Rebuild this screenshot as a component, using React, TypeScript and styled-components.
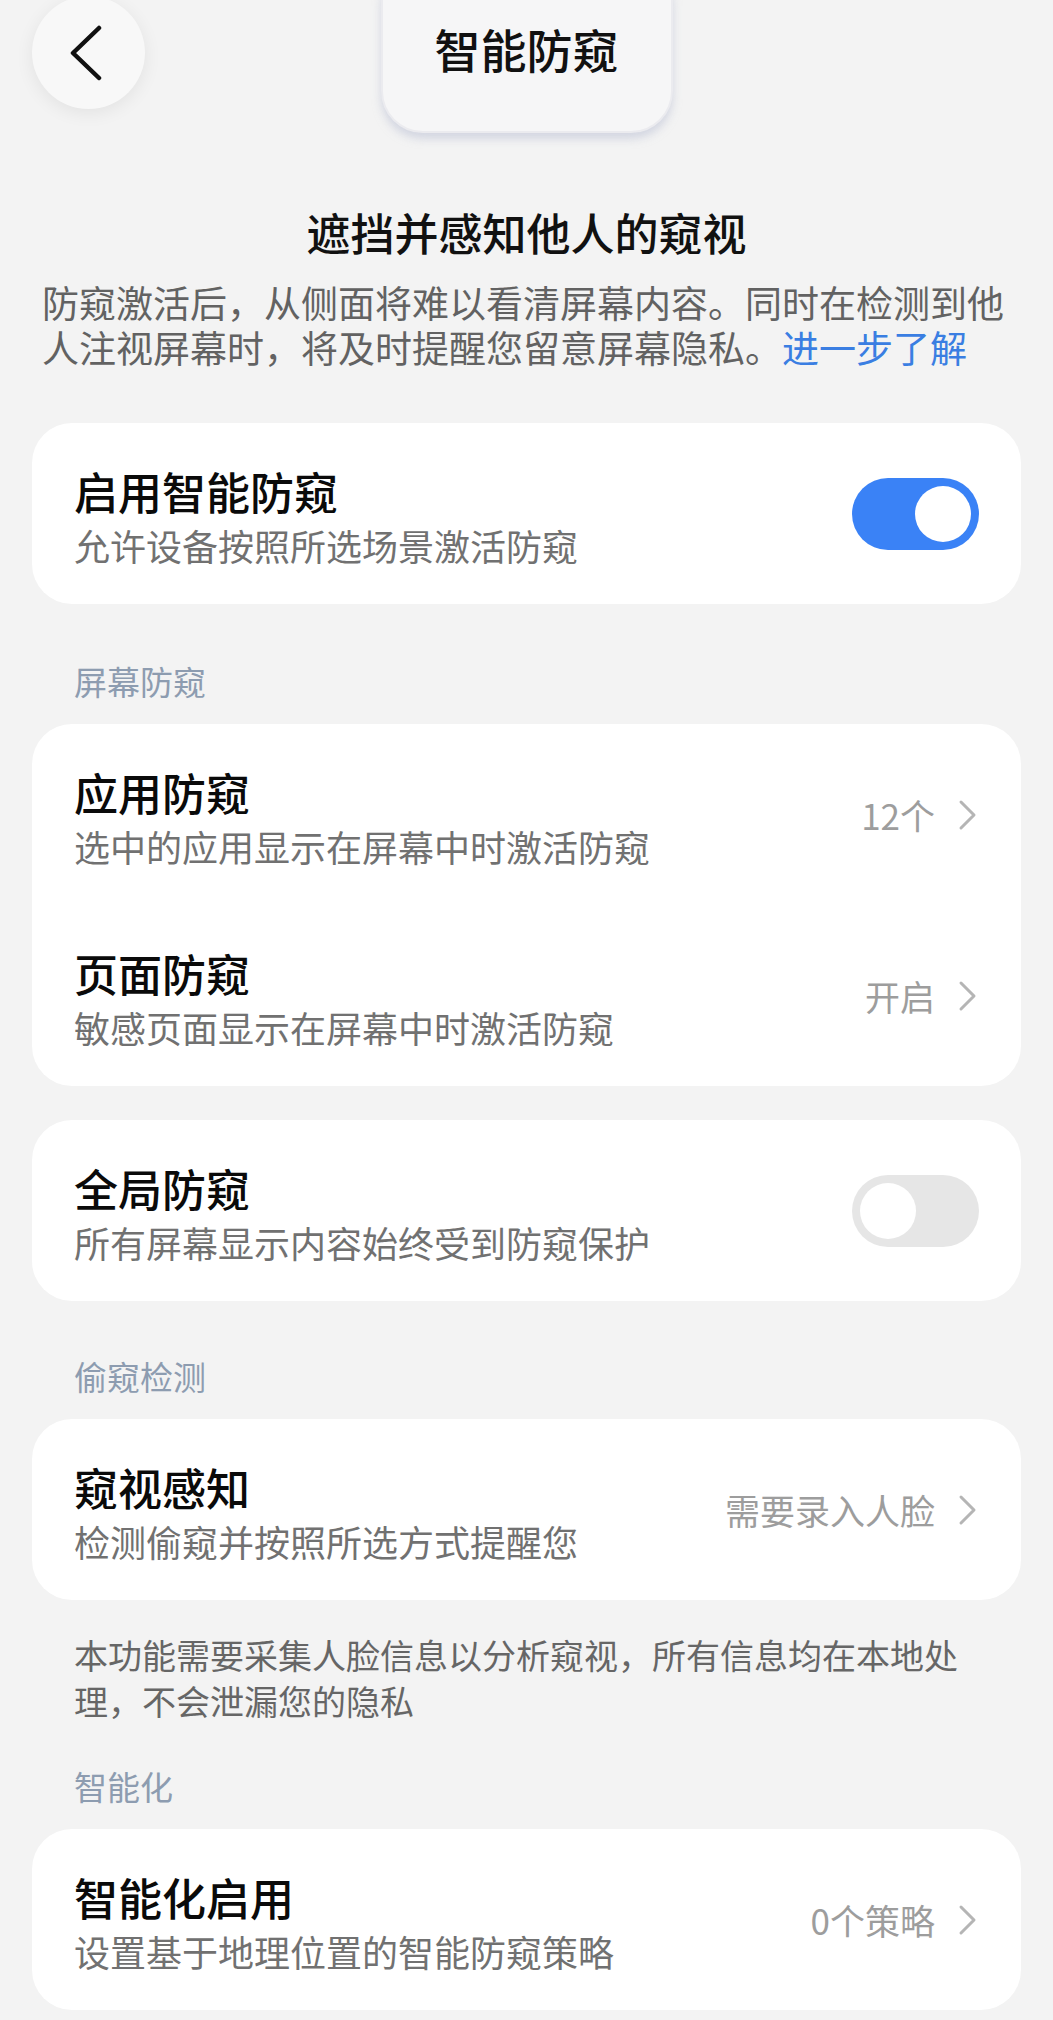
import styled, { createGlobalStyle } from "styled-components";

// --- 전역 스타일 ---
const GlobalStyle = createGlobalStyle`
  html, body {
    margin: 0;
    padding: 0;
    background: #f3f3f3;
  }
  * {
    box-sizing: border-box;
  }
`;

const BLUE = "#3a82f6";

const Page = styled.div`
  width: 1053px;
  min-height: 2020px;
  padding: 0 32px 40px;
  background: #f3f3f3;
  font-family: "Noto Sans CJK SC", "Noto Sans", sans-serif;
  color: #111;
  overflow: hidden;
`;

const Header = styled.div`
  display: grid;
  grid-template-columns: 1fr auto 1fr;
  align-items: start;
  height: 133px;
`;

const BackButton = styled.button`
  width: 113px;
  height: 113px;
  margin-top: -4px;
  border: none;
  border-radius: 50%;
  background: #f8f8f8;
  box-shadow: 0 4px 18px rgba(0, 0, 0, 0.07);
  display: flex;
  align-items: center;
  justify-content: center;
  padding: 0 6px 0 0;
  cursor: pointer;
`;

const TitleBox = styled.div`
  margin-top: -40px;
  height: 173px;
  padding: 58px 52px 0;
  border-radius: 42px;
  background: #f6f6f7;
  border: 2px solid #ebebef;
  box-shadow: 0 6px 8px rgba(186, 192, 212, 0.55);
`;

const TitleText = styled.div`
  font-size: 46px;
  line-height: 56px;
  font-weight: 500;
  white-space: nowrap;
`;

const Heading = styled.h1`
  margin: 71px 0 0;
  text-align: center;
  font-size: 44px;
  line-height: 56px;
  font-weight: 500;
`;

const Description = styled.p`
  margin: 20px 0 0;
  padding: 0 10px;
  width: 989px;
  font-size: 37px;
  line-height: 45px;
  color: #626262;
`;

const Link = styled.span`
  color: #3a7ee2;
`;

const Card = styled.div<{ $gap?: number }>`
  margin-top: ${(p) => p.$gap ?? 0}px;
  background: #fff;
  border-radius: 40px;
`;

const Row = styled.div`
  display: flex;
  align-items: center;
  justify-content: space-between;
  height: 181px;
  padding: 0 42px 0 42px;
`;

const RowText = styled.div`
  display: flex;
  flex-direction: column;
  gap: 6px;
  padding-top: 4px;
`;

const RowTitle = styled.div`
  font-size: 44px;
  line-height: 52px;
  font-weight: 500;
  color: #0a0a0a;
`;

const RowSub = styled.div`
  font-size: 36px;
  line-height: 44px;
  color: #717171;
`;

const ValueWrap = styled.div`
  display: flex;
  align-items: center;
  gap: 22px;
  font-size: 35px;
  line-height: 44px;
  color: #9d9d9d;
  white-space: nowrap;
`;

const Toggle = styled.div<{ $on: boolean }>`
  width: 127px;
  height: 72px;
  border-radius: 36px;
  padding: 8px;
  display: flex;
  justify-content: ${(p) => (p.$on ? "flex-end" : "flex-start")};
  background: ${(p) => (p.$on ? BLUE : "#e6e6e6")};
`;

const Knob = styled.div`
  width: 56px;
  height: 56px;
  border-radius: 50%;
  background: #fff;
`;

const SectionLabel = styled.div<{ $gap: number }>`
  margin: ${(p) => p.$gap}px 0 21px;
  padding-left: 42px;
  font-size: 33px;
  line-height: 44px;
  color: #8d9cb0;
`;

const Footnote = styled.p`
  margin: 32px 0 0;
  padding: 0 47px 0 42px;
  font-size: 34px;
  line-height: 46px;
  color: #666;
`;

const Chevron = () => (
  <svg width="22" height="32" viewBox="0 0 22 32" fill="none">
    <path d="M4 3 L17 16 L4 29" stroke="#b5b5b5" strokeWidth="3" strokeLinecap="round" strokeLinejoin="round" />
  </svg>
);

const BackIcon = () => (
  <svg width="34" height="56" viewBox="0 0 34 56" fill="none">
    <path d="M30 3 L4 28 L30 53" stroke="#111" strokeWidth="4.5" strokeLinecap="round" strokeLinejoin="round" />
  </svg>
);

type Item = {
  title: string;
  sub: string;
  value?: string;
  toggle?: boolean;
};

function SettingRow({ item }: { item: Item }) {
  return (
    <Row>
      <RowText>
        <RowTitle>{item.title}</RowTitle>
        <RowSub>{item.sub}</RowSub>
      </RowText>
      {item.toggle !== undefined ? (
        <Toggle $on={item.toggle}>
          <Knob />
        </Toggle>
      ) : (
        <ValueWrap>
          {item.value}
          <Chevron />
        </ValueWrap>
      )}
    </Row>
  );
}

export default function App() {
  return (
    <Page>
      <GlobalStyle />
      <Header>
        <div>
          <BackButton aria-label="返回">
            <BackIcon />
          </BackButton>
        </div>
        <TitleBox>
          <TitleText>智能防窥</TitleText>
        </TitleBox>
        <div />
      </Header>

      <Heading>遮挡并感知他人的窥视</Heading>
      <Description>
        防窥激活后，从侧面将难以看清屏幕内容。同时在检测到他人注视屏幕时，将及时提醒您留意屏幕隐私。
        <Link>进一步了解</Link>
      </Description>

      <Card $gap={53}>
        <SettingRow item={{ title: "启用智能防窥", sub: "允许设备按照所选场景激活防窥", toggle: true }} />
      </Card>

      <SectionLabel $gap={55}>屏幕防窥</SectionLabel>
      <Card>
        <SettingRow item={{ title: "应用防窥", sub: "选中的应用显示在屏幕中时激活防窥", value: "12个" }} />
        <SettingRow item={{ title: "页面防窥", sub: "敏感页面显示在屏幕中时激活防窥", value: "开启" }} />
      </Card>

      <Card $gap={34}>
        <SettingRow item={{ title: "全局防窥", sub: "所有屏幕显示内容始终受到防窥保护", toggle: false }} />
      </Card>

      <SectionLabel $gap={53}>偷窥检测</SectionLabel>
      <Card>
        <SettingRow item={{ title: "窥视感知", sub: "检测偷窥并按照所选方式提醒您", value: "需要录入人脸" }} />
      </Card>
      <Footnote>本功能需要采集人脸信息以分析窥视，所有信息均在本地处理，不会泄漏您的隐私</Footnote>

      <SectionLabel $gap={40}>智能化</SectionLabel>
      <Card>
        <SettingRow item={{ title: "智能化启用", sub: "设置基于地理位置的智能防窥策略", value: "0个策略" }} />
      </Card>
    </Page>
  );
}
